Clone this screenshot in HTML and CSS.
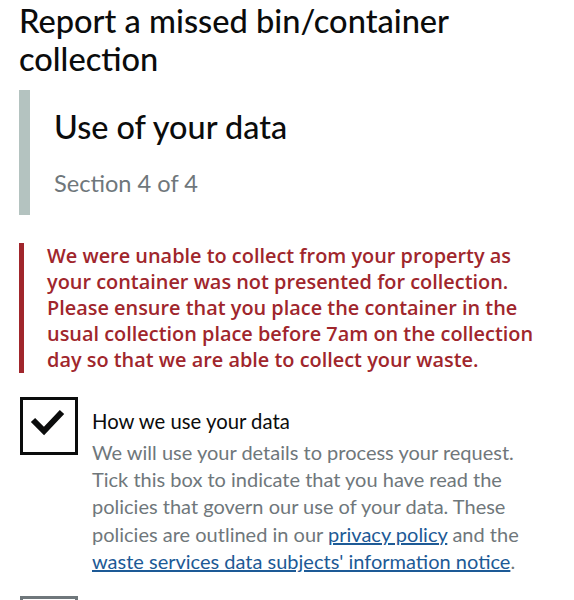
FILE: index.html
```html
<!DOCTYPE html>
<html lang="en">
<head>
<meta charset="utf-8">
<title>Report a missed bin/container collection</title>
<link rel="stylesheet" href="styles.css">
</head>
<body>
<main class="page">
  <h1 class="title">Report a missed bin/container collection</h1>
  <div class="section">
    <h2 class="section-title">Use of your data</h2>
    <p class="section-count">Section 4 of 4</p>
  </div>
  <div class="warning">
    We were unable to collect from your property as your container was not presented for collection. Please ensure that you place the container in the usual collection place before 7am on the collection day so that we are able to collect your waste.
  </div>
  <div class="check">
    <div class="box">
      <svg viewBox="0 0 52 52" width="52" height="52" aria-hidden="true"><path d="M10 20 L21 31 L39 12" fill="none" stroke="#0b0c0c" stroke-width="6" stroke-linejoin="miter"/></svg>
    </div>
    <div class="check-text">
      <div class="check-label">How we use your data</div>
      <div class="check-hint">We will use your details to process your request. Tick this box to indicate that you have read the policies that govern our use of your data. These policies are outlined in our <a href="#">privacy policy</a> and the <a href="#">waste services data subjects' information notice</a>.</div>
    </div>
  </div>
  <div class="next-box"></div>
</main>
</body>
</html>
```
FILE: styles.css
```css
html, body { margin: 0; padding: 0; background: #fff; }
body { font-family: "Lato", "Open Sans", sans-serif; color: #0b0c0c; }
.page { padding: 0 20px 0 19px; }
.title { margin: 0; padding-top: 2px; font-size: 32.6px; line-height: 38px; font-weight: 500; }
.section { margin-top: 12px; border-left: 11px solid #b4c3c0; padding: 17px 0 18px 24px; }
.section-title { margin: 0; font-size: 32.4px; line-height: 40px; font-weight: 500; }
.section-count { margin: 22px 0 0; font-size: 23.6px; line-height: 28px; color: #6f777b; }
.warning { margin-top: 28px; border-left: 5px solid #a0262c; padding: 0 12px 0 23px; color: #a0262c; font-family: "Open Sans", "Lato", sans-serif; font-size: 19.9px; line-height: 26px; font-weight: 600; }
.check { margin-top: 24px; display: flex; gap: 14px; }
.box { flex: none; width: 52px; height: 52px; border: 3px solid #0b0c0c; margin-left: 1px; }
.box svg { display: block; }
.check-text { padding-top: 11px; }
.check-label { font-size: 20.3px; line-height: 26px; }
.check-hint { margin-top: 5px; font-size: 20px; line-height: 27.2px; color: #6f777b; }
.check-hint a { color: #1d5a96; text-decoration: underline; }
.next-box { margin-top: 21px; margin-left: 1px; width: 52px; height: 52px; border: 3px solid #6f777b; }
```
